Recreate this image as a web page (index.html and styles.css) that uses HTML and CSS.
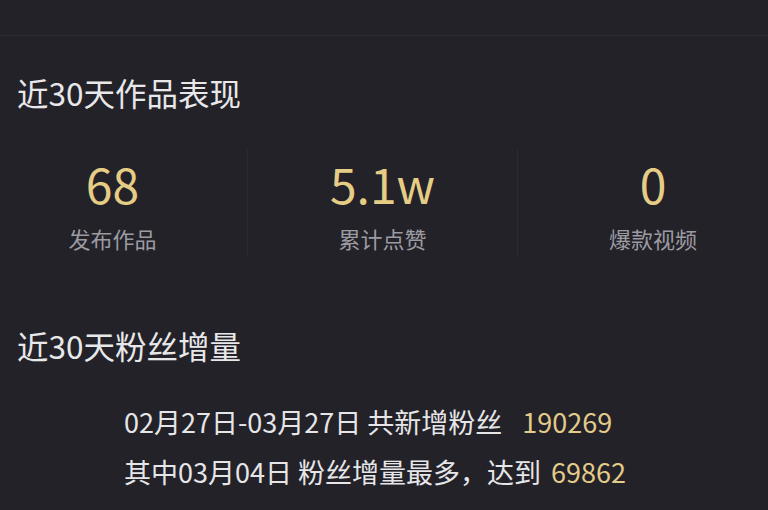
FILE: index.html
```html
<!DOCTYPE html>
<html lang="zh-CN">
<head>
<meta charset="utf-8">
<link rel="stylesheet" href="styles.css">
</head>
<body>
<div class="page">
  <div class="topbar"></div>
  <section class="works">
    <h2 class="title">近30天作品表现</h2>
    <div class="stats">
      <div class="stat">
        <div class="num">68</div>
        <div class="label">发布作品</div>
      </div>
      <div class="stat">
        <div class="num">5.1w</div>
        <div class="label">累计点赞</div>
      </div>
      <div class="stat">
        <div class="num">0</div>
        <div class="label">爆款视频</div>
      </div>
    </div>
  </section>
  <section class="fans">
    <h2 class="title">近30天粉丝增量</h2>
    <div class="lines">
      <p class="line">02月27日-03月27日 共新增粉丝<span class="gold gap1">190269</span></p>
      <p class="line">其中03月04日 粉丝增量最多，达到<span class="gold gap2">69862</span></p>
    </div>
  </section>
</div>
</body>
</html>
```
FILE: styles.css
```css
html, body {
  margin: 0;
  padding: 0;
  background: #232229;
}
body {
  width: 768px;
  height: 510px;
  overflow: hidden;
  font-family: "Noto Sans CJK SC", "Noto Sans", sans-serif;
  color: #e4e4e6;
}
.page {
  display: flex;
  flex-direction: column;
}
.topbar {
  height: 35px;
  border-bottom: 1px solid #2f2e35;
}
.title {
  margin: 0;
  padding-left: 17px;
  font-size: 31.5px;
  font-weight: 400;
  line-height: 40px;
  color: #e8e8ea;
}
.works .title {
  margin-top: 36px;
}
.stats {
  display: grid;
  grid-template-columns: repeat(3, 270px);
  margin-left: -22px;
  margin-top: 37px;
}
.stat {
  display: flex;
  flex-direction: column;
  align-items: center;
  border-right: 1px solid #2c2b32;
  padding: 6px 0 3px;
}
.stat:last-child {
  border-right: none;
}
.num {
  font-size: 48px;
  line-height: 56px;
  color: #e6cd86;
}
.label {
  font-size: 22px;
  line-height: 30px;
  color: #9c9ba1;
  margin-top: 12px;
}
.fans .title {
  margin-top: 69px;
}
.lines {
  padding-left: 124px;
  margin-top: 39px;
  display: flex;
  flex-direction: column;
  gap: 14px;
}
.line {
  margin: 0;
  font-size: 27px;
  line-height: 36px;
  color: #e6e6e8;
  white-space: nowrap;
}
.gold {
  color: #e3cb8a;
}
.gap1 {
  margin-left: 20px;
}
.gap2 {
  margin-left: 10px;
}
```
